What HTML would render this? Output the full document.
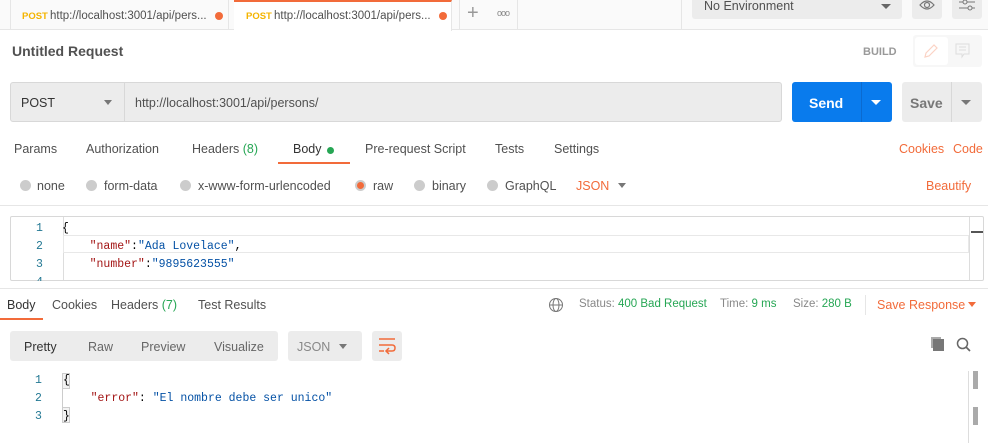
<!DOCTYPE html>
<html><head><meta charset="utf-8"><style>
*{margin:0;padding:0;box-sizing:border-box}
body{width:988px;height:443px;overflow:hidden;background:#fff;font-family:"Liberation Sans",sans-serif;font-size:12px;color:#505050;position:relative}
.a{position:absolute;white-space:nowrap}
.mono{font-family:"Liberation Mono",monospace;font-size:11.5px}
.o{color:#f26b3a}.g{color:#26a654}
.rad{position:absolute;width:11px;height:11px;border-radius:50%;background:#ccc}
</style></head><body>
<!-- tab bar -->
<div class="a" style="left:0;top:0;width:988px;height:30px;background:#fafafa;border-bottom:1px solid #e6e6e6"></div>
<div class="a" style="left:10px;top:0;width:219px;height:30px;background:#fafafa;border:1px solid #e6e6e6;border-top:none"></div>
<div class="a" style="left:22px;top:11px;font-size:9.5px;font-weight:bold;color:#f4b400">POST</div>
<div class="a" style="left:50px;top:10px;font-size:11.5px;color:#505050">http://localhost:3001/api/pers...</div>
<div class="a" style="left:215px;top:12px;width:8px;height:8px;border-radius:50%;background:#f26b3a"></div>
<div class="a" style="left:234px;top:0;width:218px;height:31px;background:#fff;border-top:2px solid #f26b3a;border-right:1px solid #e6e6e6"></div>
<div class="a" style="left:246px;top:11px;font-size:9.5px;font-weight:bold;color:#f4b400">POST</div>
<div class="a" style="left:274px;top:10px;font-size:11.5px;color:#505050">http://localhost:3001/api/pers...</div>
<div class="a" style="left:439px;top:12px;width:8px;height:8px;border-radius:50%;background:#f26b3a"></div>
<div class="a" style="left:459px;top:0;width:59px;height:30px;border-left:1px solid #e6e6e6;border-right:1px solid #e6e6e6"></div>
<div class="a" style="left:467px;top:2px;font-size:20px;color:#999">+</div>
<div class="a" style="left:497px;top:8px;font-size:9px;color:#888;letter-spacing:-1px">ooo</div>
<div class="a" style="left:681px;top:0;width:1px;height:30px;background:#e6e6e6"></div>
<div class="a" style="left:692px;top:0;width:210px;height:19px;background:#ececec;border-radius:0 0 3px 3px"></div>
<div class="a" style="left:704px;top:-1px;font-size:12.5px;color:#505050">No Environment</div>
<div class="a" style="left:881px;top:4px;border:5px solid transparent;border-top:5px solid #666"></div>
<div class="a" style="left:912px;top:0;width:30px;height:19px;background:#ececec;border-radius:0 0 3px 3px"></div>
<svg class="a" style="left:918px;top:0" width="18" height="14"><path d="M2 5Q9 -3 16 5Q9 13 2 5Z" fill="none" stroke="#777" stroke-width="1.2"/><circle cx="9" cy="5" r="2.5" fill="none" stroke="#777" stroke-width="1.2"/></svg>
<div class="a" style="left:952px;top:0;width:30px;height:19px;background:#ececec;border-radius:0 0 3px 3px"></div>
<svg class="a" style="left:958px;top:0" width="18" height="14"><path d="M1 2H17M1 8H17" stroke="#777"/><circle cx="7" cy="2" r="2" fill="#ececec" stroke="#777"/><circle cx="12" cy="8" r="2" fill="#ececec" stroke="#777"/></svg>
<!-- title -->
<div class="a" style="left:12px;top:43px;font-size:14px;color:#333;font-weight:bold;opacity:.85">Untitled Request</div>
<div class="a" style="left:863px;top:46px;font-size:11px;color:#999;font-weight:bold">BUILD</div>
<div class="a" style="left:913px;top:35px;width:69px;height:32px;background:#f7f7f7;border-radius:3px"></div>
<div class="a" style="left:915px;top:37px;width:33px;height:28px;background:#fff;border-radius:3px"></div>
<svg class="a" style="left:922px;top:42px" width="18" height="18"><path d="M3 15L4 11L12 3L15 6L7 14Z" fill="none" stroke="#fbd3c5" stroke-width="1.2"/></svg>
<svg class="a" style="left:955px;top:43px" width="16" height="16"><path d="M1 1H14V11H9L7 14V11H1Z" fill="none" stroke="#ddd"/><path d="M4 4H11M4 7H11" stroke="#ddd"/></svg>
<!-- url bar -->
<div class="a" style="left:10px;top:82px;width:772px;height:40px;background:#ececec;border:1px solid #d8d8d8;border-radius:3px"></div>
<div class="a" style="left:124px;top:82px;width:1px;height:40px;background:#d8d8d8"></div>
<div class="a" style="left:21px;top:96px;font-size:12.5px;color:#333">POST</div>
<div class="a" style="left:104px;top:100px;border:4px solid transparent;border-top:5px solid #777"></div>
<div class="a" style="left:135px;top:96px;font-size:12.5px;color:#505050">http://localhost:3001/api/persons/</div>
<div class="a" style="left:792px;top:82px;width:100px;height:40px;background:#097bed;border-radius:3px"></div>
<div class="a" style="left:861px;top:82px;width:1px;height:40px;background:#0a6ad0"></div>
<div class="a" style="left:809px;top:95px;font-size:14px;font-weight:bold;color:#fff">Send</div>
<div class="a" style="left:871px;top:100px;border:5px solid transparent;border-top:5px solid #fff"></div>
<div class="a" style="left:902px;top:82px;width:80px;height:40px;background:#ececec;border-radius:3px"></div>
<div class="a" style="left:951px;top:82px;width:1px;height:40px;background:#d8d8d8"></div>
<div class="a" style="left:910px;top:95px;font-size:14px;color:#777;font-weight:bold">Save</div>
<div class="a" style="left:961px;top:100px;border:5px solid transparent;border-top:5px solid #777"></div>
<!-- request tabs -->
<div class="a" style="left:14px;top:142px;font-size:12.5px">Params</div>
<div class="a" style="left:86px;top:142px;font-size:12.5px">Authorization</div>
<div class="a" style="left:192px;top:142px;font-size:12.5px">Headers <span class="g">(8)</span></div>
<div class="a" style="left:293px;top:142px;font-size:12.5px;color:#333">Body</div>
<div class="a" style="left:327px;top:147px;width:7px;height:7px;border-radius:50%;background:#26a654"></div>
<div class="a" style="left:278px;top:162px;width:72px;height:2px;background:#f26b3a"></div>
<div class="a" style="left:365px;top:142px;font-size:12.5px">Pre-request Script</div>
<div class="a" style="left:495px;top:142px;font-size:12.5px">Tests</div>
<div class="a" style="left:554px;top:142px;font-size:12.5px">Settings</div>
<div class="a o" style="left:899px;top:142px;font-size:12.5px">Cookies</div>
<div class="a o" style="left:953px;top:142px;font-size:12.5px">Code</div>
<!-- radios -->
<div class="rad" style="left:20px;top:180px"></div><div class="a" style="left:37px;top:179px;font-size:12.5px">none</div>
<div class="rad" style="left:86px;top:180px"></div><div class="a" style="left:104px;top:179px;font-size:12.5px">form-data</div>
<div class="rad" style="left:180px;top:180px"></div><div class="a" style="left:198px;top:179px;font-size:12.5px">x-www-form-urlencoded</div>
<div class="rad" style="left:355px;top:180px;background:#f26b3a;border:2px solid #ccc"></div><div class="a" style="left:373px;top:179px;font-size:12.5px">raw</div>
<div class="rad" style="left:414px;top:180px"></div><div class="a" style="left:432px;top:179px;font-size:12.5px">binary</div>
<div class="rad" style="left:487px;top:180px"></div><div class="a" style="left:505px;top:179px;font-size:12.5px">GraphQL</div>
<div class="a o" style="left:576px;top:179px;font-size:12.5px">JSON</div>
<div class="a" style="left:618px;top:183px;border:4px solid transparent;border-top:5px solid #777"></div>
<div class="a o" style="left:926px;top:179px;font-size:12.5px">Beautify</div>
<div class="a" style="left:0;top:205px;width:988px;height:1px;background:#e6e6e6"></div>
<!-- editor -->
<div class="a" style="left:10px;top:216px;width:974px;height:65px;border:1px solid #d8d8d8;border-radius:2px;overflow:hidden">
 <div class="a" style="left:52px;top:0;width:1px;height:65px;background:#ddd"></div>
 <div class="a" style="left:52px;top:18px;width:906px;height:18px;border:1px solid #e8e8e8"></div>
 <div class="a" style="left:958px;top:0;width:1px;height:65px;background:#ddd"></div>
 <div class="a" style="left:960px;top:14px;width:13px;height:2px;background:#555"></div>
</div>
<div class="a mono" style="left:36px;top:220px;color:#237893;line-height:18px">1<br>2<br>3<br>4</div>
<div class="a mono" style="left:62px;top:220px;line-height:18px;color:#000">{<br>&nbsp;&nbsp;&nbsp;&nbsp;<span style="color:#a31515">"name"</span>:<span style="color:#0451a5">"Ada Lovelace"</span>,<br>&nbsp;&nbsp;&nbsp;&nbsp;<span style="color:#a31515">"number"</span>:<span style="color:#0451a5">"9895623555"</span></div>
<div class="a" style="left:0;top:281px;width:988px;height:7px;background:#fff"></div>
<div class="a" style="left:0;top:288px;width:988px;height:1px;background:#e6e6e6"></div>
<!-- response tabs -->
<div class="a" style="left:7px;top:298px;font-size:12.5px;color:#333">Body</div>
<div class="a" style="left:0;top:318px;width:43px;height:2px;background:#f26b3a"></div>
<div class="a" style="left:52px;top:298px;font-size:12.5px">Cookies</div>
<div class="a" style="left:111px;top:298px;font-size:12.5px">Headers <span class="g">(7)</span></div>
<div class="a" style="left:198px;top:298px;font-size:12.5px">Test Results</div>
<svg class="a" style="left:548px;top:297px" width="16" height="16"><circle cx="8" cy="8" r="6.5" fill="none" stroke="#777"/><ellipse cx="8" cy="8" rx="3" ry="6.5" fill="none" stroke="#777"/><path d="M1.5 8H14.5" stroke="#777"/></svg>
<div class="a" style="left:579px;top:298px;font-size:11.5px;color:#888">Status: <span class="g">400 Bad Request</span></div>
<div class="a" style="left:720px;top:298px;font-size:11.5px;color:#888">Time: <span class="g">9 ms</span></div>
<div class="a" style="left:793px;top:298px;font-size:11.5px;color:#888">Size: <span class="g">280 B</span></div>
<div class="a" style="left:865px;top:295px;width:1px;height:20px;background:#e6e6e6"></div>
<div class="a o" style="left:877px;top:298px;font-size:12.5px">Save Response</div>
<div class="a" style="left:968px;top:302px;border:4px solid transparent;border-top:5px solid #f26b3a"></div>
<!-- toolbar -->
<div class="a" style="left:10px;top:331px;width:268px;height:30px;background:#ececec;border-radius:3px"></div>
<div class="a" style="left:24px;top:340px;font-size:12.5px;color:#333">Pretty</div>
<div class="a" style="left:88px;top:340px;font-size:12.5px;color:#666">Raw</div>
<div class="a" style="left:141px;top:340px;font-size:12.5px;color:#666">Preview</div>
<div class="a" style="left:214px;top:340px;font-size:12.5px;color:#666">Visualize</div>
<div class="a" style="left:288px;top:331px;width:74px;height:30px;background:#ececec;border-radius:3px"></div>
<div class="a" style="left:297px;top:340px;font-size:12.5px;color:#888">JSON</div>
<div class="a" style="left:339px;top:344px;border:4px solid transparent;border-top:5px solid #777"></div>
<div class="a" style="left:372px;top:331px;width:30px;height:30px;background:#ececec;border-radius:3px"></div>
<svg class="a" style="left:378px;top:337px" width="18" height="18"><path d="M1 2H17M1 8H14Q17 8 17 11Q17 14 14 14H9M1 14H6" fill="none" stroke="#f26b3a" stroke-width="1.5"/><path d="M11 11L8 14L11 17" fill="none" stroke="#f26b3a" stroke-width="1.5"/></svg>
<div class="a" style="left:931px;top:337px;width:10px;height:11px;background:#aaa"></div>
<div class="a" style="left:933px;top:339px;width:11px;height:12px;background:#777"></div>
<svg class="a" style="left:956px;top:337px" width="16" height="16"><circle cx="6.5" cy="6.5" r="5" fill="none" stroke="#666" stroke-width="1.5"/><path d="M10 10L14 14" stroke="#666" stroke-width="1.7"/></svg>
<!-- response code -->
<div class="a" style="left:62px;top:373px;width:8px;height:16px;border:1px solid #ccc;background:#f3f3f3"></div>
<div class="a" style="left:62px;top:407px;width:8px;height:16px;border:1px solid #ccc;background:#f3f3f3"></div>
<div class="a" style="left:62px;top:389px;width:1px;height:18px;background:#ccc"></div>
<div class="a mono" style="left:35px;top:372px;color:#237893;line-height:18px">1<br>2<br>3</div>
<div class="a mono" style="left:63px;top:372px;line-height:18px;color:#000">{<br>&nbsp;&nbsp;&nbsp;&nbsp;<span style="color:#a31515">"error"</span>: <span style="color:#0451a5">"El nombre debe ser unico"</span><br>}</div>
<div class="a" style="left:968px;top:371px;width:1px;height:72px;background:#ddd"></div>
<div class="a" style="left:973px;top:371px;width:5px;height:18px;background:#aaa"></div>
<div class="a" style="left:973px;top:407px;width:5px;height:18px;background:#aaa"></div>
</body></html>
